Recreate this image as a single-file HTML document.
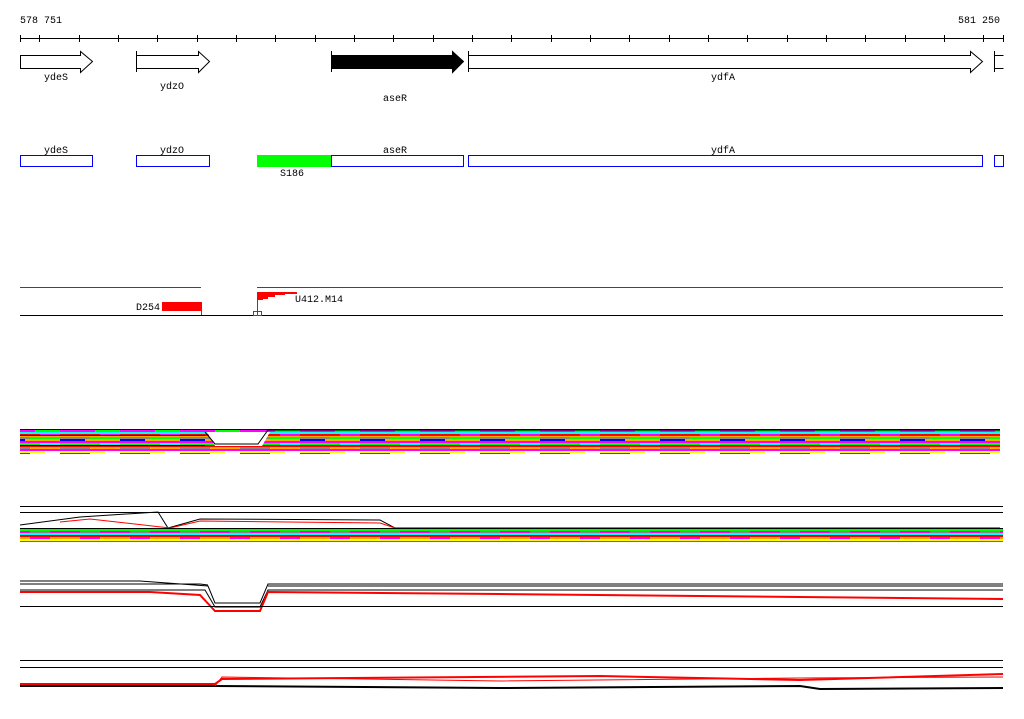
<!DOCTYPE html>
<html><head><style>
body{margin:0;background:#fff;width:1024px;height:714px;overflow:hidden}
svg text{font-family:"Liberation Mono",monospace;font-size:10px;fill:#000}
</style></head><body>
<svg width="1024" height="714" xmlns="http://www.w3.org/2000/svg" shape-rendering="crispEdges">
<defs>
<pattern id="st1" width="60" height="30" patternUnits="userSpaceOnUse" y="428">
<rect width="60" height="30" fill="#fff"/>
<rect y="0" width="60" height="2" fill="#000"/>
<rect y="2" width="35" height="2" fill="#f0f"/><rect x="35" y="2" width="25" height="2" fill="#0f0"/>
<rect y="4" width="60" height="2" fill="#0ff"/>
<rect y="6" width="40" height="2" fill="#f00"/><rect x="40" y="6" width="20" height="2" fill="#f0f"/>
<rect y="8" width="60" height="1" fill="#fa0"/>
<rect y="9" width="30" height="2" fill="#888"/><rect x="30" y="9" width="30" height="2" fill="#0f0"/>
<rect y="11" width="25" height="2" fill="#00f"/><rect x="25" y="11" width="35" height="2" fill="#fa0"/>
<rect y="13" width="60" height="2" fill="#f0f"/>
<rect y="15" width="40" height="2" fill="#0f0"/><rect x="40" y="15" width="20" height="2" fill="#0ff"/>
<rect y="17" width="60" height="2" fill="#f00"/>
<rect y="19" width="30" height="2" fill="#888"/><rect x="30" y="19" width="30" height="2" fill="#fa0"/>
<rect y="21" width="60" height="2" fill="#f0f"/>
<rect y="23" width="45" height="2" fill="#ff0"/>
<rect y="25" width="30" height="1" fill="#f00"/>
</pattern>
<pattern id="st2" width="50" height="18" patternUnits="userSpaceOnUse" y="527">
<rect width="50" height="18" fill="#fff"/>
<rect y="0" width="50" height="2" fill="#000"/>
<rect y="2" width="50" height="2" fill="#0f0"/>
<rect y="4" width="30" height="2" fill="#f0f"/><rect x="30" y="4" width="20" height="2" fill="#888"/>
<rect y="6" width="50" height="2" fill="#0ff"/>
<rect y="8" width="50" height="2" fill="#f00"/>
<rect y="10" width="30" height="2" fill="#fa0"/><rect x="30" y="10" width="20" height="2" fill="#f0f"/>
<rect y="12" width="50" height="2" fill="#ff0"/>
<rect y="14" width="50" height="1" fill="#f0f"/>
</pattern>
</defs>
<text x="20" y="23">578 751</text>
<text x="958" y="23">581 250</text>
<line x1="20" y1="38.5" x2="1003" y2="38.5" stroke="#000"/>
<g stroke="#000">
<path d="M20.5 35v7M39.5 35v7M79.5 35v7M118.5 35v7M157.5 35v7M197.5 35v7M236.5 35v7M275.5 35v7M315.5 35v7M354.5 35v7M393.5 35v7M433.5 35v7M472.5 35v7M511.5 35v7M551.5 35v7M590.5 35v7M629.5 35v7M669.5 35v7M708.5 35v7M747.5 35v7M787.5 35v7M826.5 35v7M865.5 35v7M905.5 35v7M944.5 35v7M983.5 35v7M1003.5 35v7"/>
</g>
<g stroke="#000" fill="#fff" shape-rendering="auto">
<path d="M20.5 55.5H80.5V51.5L92.5 61.5L80.5 72.5V68.5H20.5Z"/>
<path d="M136.5 55.5H198.5V51.5L209.5 61.5L198.5 72.5V68.5H136.5ZM136.5 51v21"/>
<path d="M331.5 55.5H452.5V51.5L463.5 61.5L452.5 72.5V68.5H331.5Z" fill="#000"/>
<path d="M331.5 51v21"/>
<path d="M468.5 55.5H970.5V51.5L982.5 61.5L970.5 72.5V68.5H468.5ZM468.5 51v21"/>
<path d="M1003.5 55.5H994.5V68.5H1003.5M994.5 51v21" fill="none"/>
</g>
<text x="44" y="80">ydeS</text>
<text x="160" y="89">ydzO</text>
<text x="383" y="101">aseR</text>
<text x="711" y="80">ydfA</text>
<text x="44" y="153">ydeS</text>
<text x="160" y="153">ydzO</text>
<text x="383" y="153">aseR</text>
<text x="711" y="153">ydfA</text>
<g stroke="#00f" fill="none">
<rect x="20.5" y="155.5" width="72" height="11"/>
<rect x="136.5" y="155.5" width="73" height="11"/>
<rect x="331.5" y="155.5" width="132" height="11"/>
<rect x="468.5" y="155.5" width="514" height="11"/>
<rect x="994.5" y="155.5" width="9" height="11"/>
</g>
<rect x="257" y="155" width="74" height="12" fill="#0f0"/>
<text x="280" y="176">S186</text>
<path d="M20 287.5H201M257 287.5H1003" stroke="#e00"/>
<path d="M20 315.5H1003" stroke="#000"/>
<rect x="162" y="302" width="40" height="9" fill="#f00"/>
<path d="M201.5 302v13" stroke="#f00"/>
<text x="136" y="310">D254</text>
<path d="M257.5 292v23" stroke="#f00"/>
<path d="M257 292H297V294H285V295H275V297H268V299H263V300H257Z" fill="#f00"/>
<rect x="253.5" y="311.5" width="8" height="4" fill="none" stroke="#f00"/>
<text x="295" y="302">U412.M14</text>
<rect x="20" y="429" width="980" height="28" fill="url(#st1)"/>
<path d="M207 432L215 446H262L270 432Z" fill="#fff"/>
<path d="M205 432L215 444H258L268 430H1000" stroke="#000" fill="none" shape-rendering="auto"/>
<path d="M20 435.5H205M20 445.5H205" stroke="#000"/>
<path d="M20 506.5H1003M20 512.5H1003" stroke="#000"/>
<path d="M20 525L80 517L158 512L168 528L200 519L380 520L395 528L1000 528" stroke="#000" fill="none" shape-rendering="auto"/>
<path d="M60 522L90 519L170 528L200 521L380 523L395 528" stroke="#f00" fill="none" shape-rendering="auto"/>
<rect x="20" y="528" width="983" height="16" fill="url(#st2)"/>
<g fill="none" shape-rendering="auto">
<path d="M20 581H140L208 586L215 603H260L268 584H1003" stroke="#000"/>
<path d="M20 584H200L208 585M268 586H1003" stroke="#000"/>
<path d="M20 590H205L215 607H260L268 590H1003" stroke="#000"/>
<path d="M20 592H150L200 595L215 611H260L268 592L500 594L1003 599" stroke="#f00" stroke-width="2"/>
</g>
<path d="M20 606.5H1003M20 660.5H1003M20 667.5H1003" stroke="#000"/>
<g fill="none" shape-rendering="auto">
<path d="M20 684H215L222 679L600 676L800 680L1003 674" stroke="#f00" stroke-width="2"/>
<path d="M20 686H215L500 688L800 686L820 689L1003 688" stroke="#000" stroke-width="2"/>
<path d="M215 686L222 677L500 681L800 678L1003 677" stroke="#f00"/>
</g>
</svg>
</body></html>
